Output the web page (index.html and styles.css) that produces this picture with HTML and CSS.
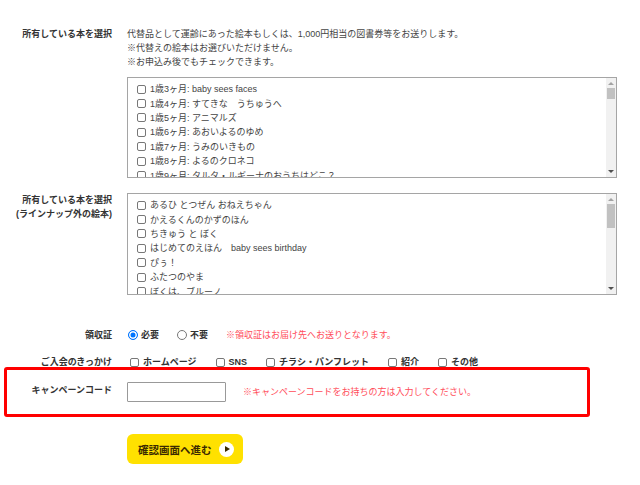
FILE: index.html
```html
<!DOCTYPE html>
<html lang="ja">
<head>
  <meta charset="UTF-8">
  <title>申込フォーム</title>
  <link rel="stylesheet" href="styles.css">
</head>
<body>
  <div class="form">

    <!-- 所有している本 -->
    <div class="row">
      <div class="label">所有している本を選択</div>
      <div class="field">
        <p class="note">代替品として運齢にあった絵本もしくは、1,000円相当の図書券等をお送りします。</p>
        <p class="note">※代替えの絵本はお選びいただけません。</p>
        <p class="note">※お申込み後でもチェックできます。</p>
        <div class="listbox listbox-first">
          <ul class="list">
            <li><input type="checkbox" class="check">1歳3ヶ月: baby sees faces</li>
            <li><input type="checkbox" class="check">1歳4ヶ月: すてきな　うちゅうへ</li>
            <li><input type="checkbox" class="check">1歳5ヶ月: アニマルズ</li>
            <li><input type="checkbox" class="check">1歳6ヶ月: あおいよるのゆめ</li>
            <li><input type="checkbox" class="check">1歳7ヶ月: うみのいきもの</li>
            <li><input type="checkbox" class="check">1歳8ヶ月: よるのクロネコ</li>
            <li><input type="checkbox" class="check">1歳9ヶ月: タルタ・ルギーナのおうちはどこ？</li>
          </ul>
          <div class="scrollbar">
            <span class="arrow-up"></span>
            <span class="thumb thumb-short"></span>
            <span class="arrow-down"></span>
          </div>
        </div>
      </div>
    </div>

    <!-- ラインナップ外 -->
    <div class="row row-other">
      <div class="label">所有している本を選択<br>(ラインナップ外の絵本)</div>
      <div class="field">
        <div class="listbox listbox-second">
          <ul class="list">
            <li><input type="checkbox" class="check">あるひ とつぜん おねえちゃん</li>
            <li><input type="checkbox" class="check">かえるくんのかずのほん</li>
            <li><input type="checkbox" class="check">ちきゅう と ぼく</li>
            <li><input type="checkbox" class="check">はじめてのえほん　baby sees birthday</li>
            <li><input type="checkbox" class="check">ぴぅ！</li>
            <li><input type="checkbox" class="check">ふたつのやま</li>
            <li><input type="checkbox" class="check">ぼくは、ブルーノ</li>
          </ul>
          <div class="scrollbar">
            <span class="arrow-up"></span>
            <span class="thumb thumb-long"></span>
            <span class="arrow-down"></span>
          </div>
        </div>
      </div>
    </div>

    <!-- 領収証 -->
    <div class="row row-receipt">
      <div class="label">領収証</div>
      <div class="field inline">
        <label class="choice"><input type="radio" name="receipt" class="radio" checked>必要</label>
        <label class="choice"><input type="radio" name="receipt" class="radio">不要</label>
        <span class="alert">※領収証はお届け先へお送りとなります。</span>
      </div>
    </div>

    <!-- きっかけ -->
    <div class="row row-reason">
      <div class="label">ご入会のきっかけ</div>
      <div class="field inline">
        <label class="choice"><input type="checkbox" class="check">ホームページ</label>
        <label class="choice"><input type="checkbox" class="check">SNS</label>
        <label class="choice"><input type="checkbox" class="check">チラシ・パンフレット</label>
        <label class="choice"><input type="checkbox" class="check">紹介</label>
        <label class="choice"><input type="checkbox" class="check">その他</label>
      </div>
    </div>

    <!-- キャンペーンコード -->
    <div class="campaign">
      <div class="label">キャンペーンコード</div>
      <div class="field inline">
        <input type="text" class="code-input">
        <span class="alert">※キャンペーンコードをお持ちの方は入力してください。</span>
      </div>
    </div>

    <button class="submit-button">確認画面へ進む<span class="play"></span></button>
  </div>
</body>
</html>
```

FILE: styles.css
```css
body {
  margin: 0;
  background-color: #fff;
  font-family: "Liberation Sans", "Noto Sans CJK JP", sans-serif;
  font-size: 9px;
  line-height: 14px;
  color: #444;
}

.form {
  width: 617px;
  padding-top: 27px;
}

.row {
  display: grid;
  grid-template-columns: 112px 1fr;
  column-gap: 15px;
}

.label {
  text-align: right;
  font-weight: bold;
  color: #333;
}

.note {
  margin: 0;
}

.listbox {
  display: flex;
  border: 1px solid #a5a5a5;
  background-color: #fff;
  overflow: hidden;
}

.listbox-first {
  margin-top: 8px;
  height: 99px;
}

.listbox-second {
  height: 100px;
}

.list {
  flex: 1;
  list-style: none;
  margin: 0;
  padding: 4px 0 0 9px;
  overflow: hidden;
}

.list li {
  display: flex;
  align-items: center;
  height: 14.4px;
  white-space: nowrap;
}

.check {
  appearance: none;
  width: 9px;
  height: 9px;
  margin: 0 4px 0 0;
  border: 1px solid #777;
  border-radius: 2px;
  background-color: #fff;
  flex-shrink: 0;
}

.radio {
  appearance: none;
  width: 10px;
  height: 10px;
  margin: 0 3px 0 0;
  border: 1px solid #777;
  border-radius: 50%;
  background-color: #fff;
  flex-shrink: 0;
}

.radio:checked {
  border-color: #0075ff;
  background-color: #0075ff;
  box-shadow: inset 0 0 0 1.5px #fff;
}

.scrollbar {
  width: 10px;
  background-color: #f1f1f1;
  display: flex;
  flex-direction: column;
  align-items: center;
  position: relative;
}

.arrow-up {
  margin-top: 4px;
  border-left: 3px solid transparent;
  border-right: 3px solid transparent;
  border-bottom: 3px solid #a3a3a3;
}

.thumb {
  width: 8px;
  margin-top: 3px;
  background-color: #c1c1c1;
}

.thumb-short {
  height: 11px;
}

.thumb-long {
  height: 24px;
}

.arrow-down {
  margin-top: auto;
  margin-bottom: 4px;
  border-left: 3px solid transparent;
  border-right: 3px solid transparent;
  border-top: 3px solid #505050;
}

.row-other {
  margin-top: 15px;
}

.row-receipt {
  margin-top: 33px;
}

.row-reason {
  margin-top: 13px;
}

.inline {
  display: flex;
  align-items: center;
}

.choice {
  display: flex;
  align-items: center;
  color: #333;
}

.row-reason .choice {
  font-weight: bold;
  margin: 0 16px 0 3px;
}

.row-receipt .choice {
  font-weight: bold;
  margin: 0 17px 0 1px;
}

.alert {
  color: #ff4d5a;
  margin-left: 1px;
}

.campaign {
  display: grid;
  grid-template-columns: 105px 1fr;
  column-gap: 15px;
  margin-left: 4px;
  width: 580px;
  margin-top: -2px;
  padding: 12px 0 12px;
  border: 3px solid #ff0000;
  border-radius: 3px;
}

.campaign .label {
  align-self: start;
  padding-top: 1px;
}

.code-input {
  width: 99px;
  height: 20px;
  box-sizing: border-box;
  margin: 0 16px 0 0;
  border: 1px solid #999;
  border-radius: 1px;
}

.submit-button {
  display: flex;
  align-items: center;
  justify-content: space-between;
  margin: 17px 0 0 127px;
  width: 116px;
  height: 30px;
  padding: 0 9px 0 11px;
  border: none;
  border-radius: 6px;
  background-color: #ffe100;
  color: #3b2a00;
  font-family: "Liberation Sans", "Noto Sans CJK JP", sans-serif;
  font-size: 10.5px;
  font-weight: bold;
  cursor: pointer;
}

.play {
  position: relative;
  width: 15px;
  height: 15px;
  border-radius: 50%;
  background-color: #fff;
}

.play::after {
  content: "";
  position: absolute;
  left: 6px;
  top: 4.5px;
  border-top: 3px solid transparent;
  border-bottom: 3px solid transparent;
  border-left: 5px solid #3b2a00;
}
```
